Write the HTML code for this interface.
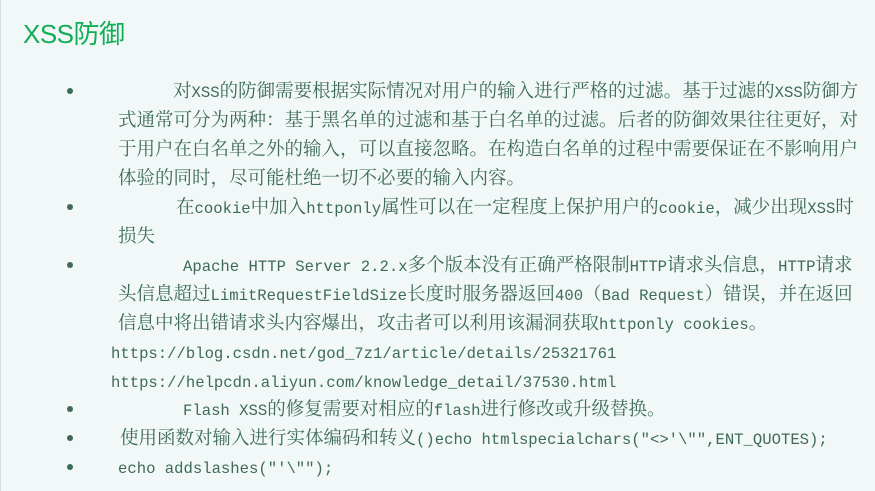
<!DOCTYPE html>
<html><head><meta charset="utf-8"><style>
html,body{margin:0;padding:0}
body{width:875px;height:491px;background:#f1f8f7;position:relative;overflow:hidden;border-left:1px solid #d8dede;box-sizing:border-box}
h1{position:absolute;left:22px;top:14px;margin:0;font:26px "Liberation Sans","Noto Sans CJK SC",sans-serif;color:#12ad55;letter-spacing:-0.5px}
.l{position:absolute;white-space:pre;font-family:"Noto Serif CJK SC","Liberation Serif",serif;font-size:18.5px;color:#3d6a5a;line-height:22px}
.m{font-family:"Liberation Mono",monospace;font-size:15.6px}
.b{position:absolute;left:66px;width:6px;height:6px;border-radius:50%;background:#3d6a5a}
</style></head><body>
<h1>XSS防御</h1>
<div class="b" style="top:88px"></div>
<div class="l" style="left:172px;top:79px">对<span class="m">XSS</span>的防御需要根据实际情况对用户的输入进行严格的过滤。基于过滤的<span class="m">XSS</span>防御方</div>
<div class="l" style="left:117px;top:108px">式通常可分为两种：基于黑名单的过滤和基于白名单的过滤。后者的防御效果往往更好，对</div>
<div class="l" style="left:117px;top:137px">于用户在白名单之外的输入，可以直接忽略。在构造白名单的过程中需要保证在不影响用户</div>
<div class="l" style="left:117px;top:166px">体验的同时，尽可能杜绝一切不必要的输入内容。</div>
<div class="b" style="top:204px"></div>
<div class="l" style="left:175px;top:195px">在<span class="m">cookie</span>中加入<span class="m">httponly</span>属性可以在一定程度上保护用户的<span class="m">cookie</span>，减少出现<span class="m">XSS</span>时</div>
<div class="l" style="left:117px;top:224px">损失</div>
<div class="b" style="top:262px"></div>
<div class="l" style="left:182px;top:253px"><span class="m">Apache HTTP Server 2.2.x</span>多个版本没有正确严格限制<span class="m">HTTP</span>请求头信息，<span class="m">HTTP</span>请求</div>
<div class="l" style="left:117px;top:282px">头信息超过<span class="m">LimitRequestFieldSize</span>长度时服务器返回<span class="m">400</span>（<span class="m">Bad Request</span>）错误，并在返回</div>
<div class="l" style="left:117px;top:311px">信息中将出错请求头内容爆出，攻击者可以利用该漏洞获取<span class="m">httponly cookies</span>。</div>
<div class="l" style="left:110px;top:340px"><span class="m">https://blog.csdn.net/god_7z1/article/details/25321761</span></div>
<div class="l" style="left:110px;top:369px"><span class="m">https://helpcdn.aliyun.com/knowledge_detail/37530.html</span></div>
<div class="b" style="top:406px"></div>
<div class="l" style="left:182px;top:397px"><span class="m">Flash XSS</span>的修复需要对相应的<span class="m">flash</span>进行修改或升级替换。</div>
<div class="b" style="top:435px"></div>
<div class="l" style="left:119px;top:426px">使用函数对输入进行实体编码和转义<span class="m">()echo htmlspecialchars("&lt;&gt;'\"",ENT_QUOTES);</span></div>
<div class="b" style="top:464px"></div>
<div class="l" style="left:117px;top:455px"><span class="m">echo addslashes("'\"");</span></div>
</body></html>
